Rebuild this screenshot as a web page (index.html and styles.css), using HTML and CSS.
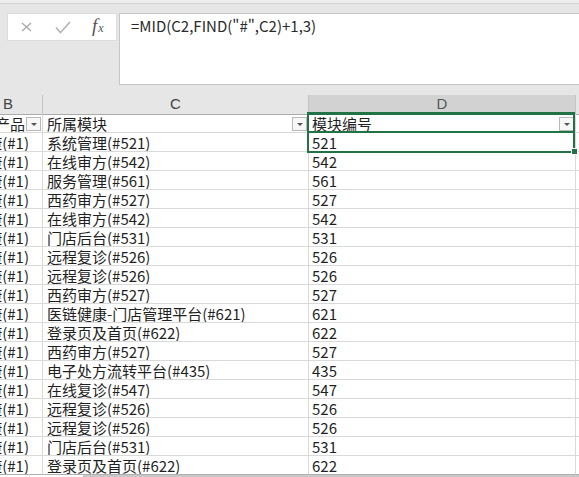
FILE: index.html
```html
<!DOCTYPE html>
<html lang="zh-CN">
<head>
<meta charset="utf-8">
<title>Excel</title>
<link rel="stylesheet" href="styles.css">
</head>
<body>
<div class="ribbon">
  <div class="topline"></div>
  <div class="fbar">
    <div class="tools">
      <svg class="ic-x" width="11" height="10" viewBox="0 0 11 10"><path d="M1 1 L10 9 M10 1 L1 9" stroke="#ababab" stroke-width="1.4" fill="none"/></svg>
      <svg class="ic-ok" width="16" height="13" viewBox="0 0 16 13"><path d="M1 6.5 L5.5 11.5 L15 1" stroke="#b3b3b3" stroke-width="1.6" fill="none"/></svg>
      <span class="fx"><i>f</i><span class="fx-x">x</span></span>
    </div>
    <div class="formula">=MID(C2,FIND("#",C2)+1,3)</div>
  </div>
</div>

<div class="sheet">
  <div class="colhdr">
    <div class="h hb">B</div>
    <div class="h hc">C</div>
    <div class="h hd">D</div>
    <div class="h he"></div>
  </div>

  <div class="row hdr">
    <div class="cell b"><span>所属产品</span><i class="flt"></i></div>
    <div class="cell c"><span>所属模块</span><i class="flt"></i></div>
    <div class="cell d"><span>模块编号</span><i class="flt"></i></div>
    <div class="cell e"></div>
  </div>
  <div class="row"><div class="cell b"><span>健康(#1)</span></div><div class="cell c">系统管理(#521)</div><div class="cell d">521</div><div class="cell e"></div></div>
  <div class="row"><div class="cell b"><span>健康(#1)</span></div><div class="cell c">在线审方(#542)</div><div class="cell d">542</div><div class="cell e"></div></div>
  <div class="row"><div class="cell b"><span>健康(#1)</span></div><div class="cell c">服务管理(#561)</div><div class="cell d">561</div><div class="cell e"></div></div>
  <div class="row"><div class="cell b"><span>健康(#1)</span></div><div class="cell c">西药审方(#527)</div><div class="cell d">527</div><div class="cell e"></div></div>
  <div class="row"><div class="cell b"><span>健康(#1)</span></div><div class="cell c">在线审方(#542)</div><div class="cell d">542</div><div class="cell e"></div></div>
  <div class="row"><div class="cell b"><span>健康(#1)</span></div><div class="cell c">门店后台(#531)</div><div class="cell d">531</div><div class="cell e"></div></div>
  <div class="row"><div class="cell b"><span>健康(#1)</span></div><div class="cell c">远程复诊(#526)</div><div class="cell d">526</div><div class="cell e"></div></div>
  <div class="row"><div class="cell b"><span>健康(#1)</span></div><div class="cell c">远程复诊(#526)</div><div class="cell d">526</div><div class="cell e"></div></div>
  <div class="row"><div class="cell b"><span>健康(#1)</span></div><div class="cell c">西药审方(#527)</div><div class="cell d">527</div><div class="cell e"></div></div>
  <div class="row"><div class="cell b"><span>健康(#1)</span></div><div class="cell c">医链健康-门店管理平台(#621)</div><div class="cell d">621</div><div class="cell e"></div></div>
  <div class="row"><div class="cell b"><span>健康(#1)</span></div><div class="cell c">登录页及首页(#622)</div><div class="cell d">622</div><div class="cell e"></div></div>
  <div class="row"><div class="cell b"><span>健康(#1)</span></div><div class="cell c">西药审方(#527)</div><div class="cell d">527</div><div class="cell e"></div></div>
  <div class="row"><div class="cell b"><span>健康(#1)</span></div><div class="cell c">电子处方流转平台(#435)</div><div class="cell d">435</div><div class="cell e"></div></div>
  <div class="row"><div class="cell b"><span>健康(#1)</span></div><div class="cell c">在线复诊(#547)</div><div class="cell d">547</div><div class="cell e"></div></div>
  <div class="row"><div class="cell b"><span>健康(#1)</span></div><div class="cell c">远程复诊(#526)</div><div class="cell d">526</div><div class="cell e"></div></div>
  <div class="row"><div class="cell b"><span>健康(#1)</span></div><div class="cell c">远程复诊(#526)</div><div class="cell d">526</div><div class="cell e"></div></div>
  <div class="row"><div class="cell b"><span>健康(#1)</span></div><div class="cell c">门店后台(#531)</div><div class="cell d">531</div><div class="cell e"></div></div>
  <div class="row last"><div class="cell b"><span>健康(#1)</span></div><div class="cell c">登录页及首页(#622)</div><div class="cell d">622</div><div class="cell e"></div></div>

  <div class="foot"><div class="foot-l"></div><div class="foot-r"></div></div>

  <div class="sel"></div>
  <div class="handle"></div>
</div>
</body>
</html>
```

FILE: styles.css
```css
* { box-sizing: border-box; margin: 0; padding: 0; }
html, body { width: 579px; height: 477px; overflow: hidden; }
body {
  background: #fff;
  font-family: "Noto Sans CJK SC", "Noto Sans", sans-serif;
  color: #1f1f1f;
}

/* formula bar area */
.ribbon { height: 95px; background: #e6e6e6; }
.topline { height: 4px; background: #eeeeee; border-bottom: 1px solid #d4d4d4; }
.fbar { display: flex; align-items: flex-start; padding: 9px 0 0 7px; }
.tools {
  width: 110px; height: 28px; background: #fff;
  border: 1px solid #dcdcdc;
  display: flex; align-items: center;
}
.ic-x { margin-left: 13px; }
.ic-ok { margin-left: 23px; margin-top: 1px; }
.fx {
  margin-left: 21px;
  font-family: "Liberation Serif", serif;
  color: #555;
  font-size: 19px;
  line-height: 20px;
  display: flex; align-items: baseline;
}
.fx i { font-style: italic; }
.fx-x { font-size: 12px; font-style: italic; margin-left: 1px; }
.formula {
  margin-left: 2px;
  flex: 1;
  height: 72px;
  background: #fff;
  border: 1px solid #c6c6c6;
  border-right: 0;
  padding: 2px 0 0 11px;
  font-size: 15px;
  line-height: 19px;
  color: #2a2a2a;
  white-space: nowrap;
}

/* sheet */
.sheet { position: relative; }
.colhdr, .row {
  display: grid;
  grid-template-columns: 43px 266px 267px 3px;
  height: 19px;
}
.h {
  background: #e6e6e6;
  border-right: 1px solid #c4c4c4;
  border-bottom: 1px solid #ababab;
  font-family: "Liberation Sans", sans-serif;
  font-size: 15px;
  line-height: 18px;
  color: #444;
  text-align: center;
}
.hb { text-align: left; padding-left: 3px; }
.hd { background: #d2d2d2; color: #4e5d54; border-bottom: 2px solid #217346; }
.he { border-right: 0; }

.cell {
  border-right: 1px solid #d9d9d9;
  border-bottom: 1px solid #d9d9d9;
  font-size: 15px;
  line-height: 18px;
  padding: 1px 0 0 4px;
  white-space: nowrap;
  overflow: hidden;
}
.b { display: flex; justify-content: flex-end; padding: 1px 13px 0 0; }
.b span { flex-shrink: 0; }
.d { padding-left: 3px; }
.e { border-right: 0; }

.hdr .cell { display: flex; align-items: flex-start; }
.hdr .b { justify-content: flex-end; padding-right: 0; }
.hdr .b span { margin-right: 1px; }
.hdr .c .flt, .hdr .d .flt { margin-left: auto; }
.flt {
  flex-shrink: 0;
  width: 15px; height: 14px;
  margin: 2px 1px 0 0;
  background: #f7f7f7;
  border: 1px solid #b9b9b9;
  display: flex; align-items: center; justify-content: center;
}
.flt::after {
  content: "";
  border-left: 3px solid transparent;
  border-right: 3px solid transparent;
  border-top: 3px solid #555;
}

.last .cell { border-bottom-color: #b0b0b0; }

.foot { display: flex; height: 2px; }
.foot-l { width: 83px; background: #fff; }
.foot-r { flex: 1; background: #c8c8c8; }

/* selection overlay */
.sel {
  position: absolute;
  left: 307px; top: 17px;
  width: 268px; height: 41px;
  border: 2px solid #217346;
}
.sel::after {
  content: "";
  position: absolute;
  left: 0; right: 0; top: 17px;
  height: 2px;
  background: #217346;
}
.handle {
  position: absolute;
  left: 571px; top: 53px;
  width: 7px; height: 7px;
  background: #217346;
  border: 1px solid #fff;
}
```
